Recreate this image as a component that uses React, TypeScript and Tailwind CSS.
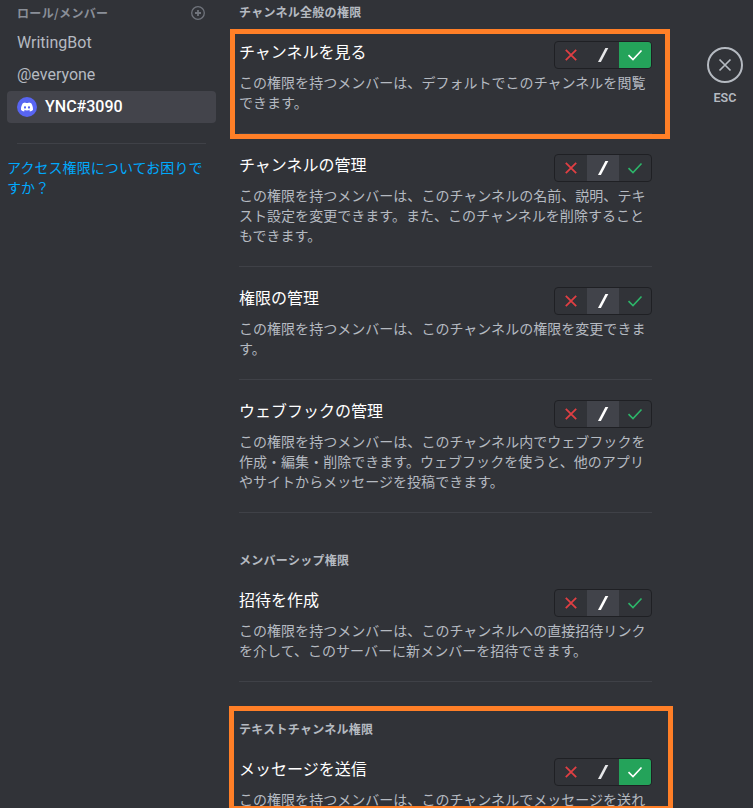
import React from "react";

type State = "neutral" | "allow";
type Permission = { title: string; lines: string[]; state: State };

function Toggle({ state }: { state: State }) {
  return (
    <div className="flex h-7 w-[98px] shrink-0 overflow-hidden rounded border border-[#1f2024]">
      <div className="flex w-8 items-center justify-center text-[#e03f43]">
        <svg width="16" height="16" viewBox="0 0 16 16" fill="none" stroke="currentColor" strokeWidth="1.8">
          <path d="M2.8 2.8l10.4 10.4M13.2 2.8L2.8 13.2" />
        </svg>
      </div>
      <div className={state === "neutral" ? "flex w-8 items-center justify-center bg-[#41434a] text-white" : "flex w-8 items-center justify-center text-[#e6e7e9]"}>
        <svg width="16" height="16" viewBox="0 0 16 16" fill="currentColor">
          <path d="M10.4 1h2.9L5.9 15H3z" />
        </svg>
      </div>
      <div className={state === "allow" ? "flex w-8 items-center justify-center bg-[#24a35a] text-white" : "flex w-8 items-center justify-center text-[#2db569]"}>
        <svg width="16" height="16" viewBox="0 0 16 16" fill="none" stroke="currentColor" strokeWidth="1.6">
          <path d="M1.5 8.2L6 12.5L14.5 3.5" />
        </svg>
      </div>
    </div>
  );
}

function PermissionRow({ item }: { item: Permission }) {
  return (
    <div className="mb-5">
      <div className="flex h-7 justify-between">
        <h3 className="text-[16px] leading-5 whitespace-nowrap text-white">{item.title}</h3>
        <Toggle state={item.state} />
      </div>
      <p className="mt-[3px] text-[14px] leading-5 tracking-[0.03px] whitespace-nowrap text-[#b5bac1]">
        {item.lines.map((line) => (
          <span key={line} className="block">{line}</span>
        ))}
      </p>
      <div className="mt-[21px] h-px bg-[#3f4147]" />
    </div>
  );
}

function Section({ title, items }: { title: string; items: Permission[] }) {
  return (
    <section className="mb-[39px]">
      <h2 className="mb-[21px] text-[12px] leading-4 font-bold tracking-[0.28px] text-[#b5bac1]">{title}</h2>
      {items.map((item) => (
        <PermissionRow key={item.title} item={item} />
      ))}
    </section>
  );
}

const sections: { title: string; items: Permission[] }[] = [
  {
    title: "チャンネル全般の権限",
    items: [
      { title: "チャンネルを見る", state: "allow", lines: ["この権限を持つメンバーは、デフォルトでこのチャンネルを閲覧", "できます。"] },
      { title: "チャンネルの管理", state: "neutral", lines: ["この権限を持つメンバーは、このチャンネルの名前、説明、テキ", "スト設定を変更できます。また、このチャンネルを削除すること", "もできます。"] },
      { title: "権限の管理", state: "neutral", lines: ["この権限を持つメンバーは、このチャンネルの権限を変更できま", "す。"] },
      { title: "ウェブフックの管理", state: "neutral", lines: ["この権限を持つメンバーは、このチャンネル内でウェブフックを", "作成・編集・削除できます。ウェブフックを使うと、他のアプリ", "やサイトからメッセージを投稿できます。"] },
    ],
  },
  {
    title: "メンバーシップ権限",
    items: [
      { title: "招待を作成", state: "neutral", lines: ["この権限を持つメンバーは、このチャンネルへの直接招待リンク", "を介して、このサーバーに新メンバーを招待できます。"] },
    ],
  },
  {
    title: "テキストチャンネル権限",
    items: [
      { title: "メッセージを送信", state: "allow", lines: ["この権限を持つメンバーは、このチャンネルでメッセージを送れ"] },
    ],
  },
];

function Sidebar() {
  return (
    <aside className="ml-[7px] w-[209px] shrink-0 pt-[5px]">
      <div className="flex h-4 items-center justify-between pr-[11px] pl-[10px]">
        <span className="text-[12px] leading-4 font-bold tracking-[0.35px] text-[#8a8f98]">ロール/メンバー</span>
        <svg width="14" height="14" viewBox="0 0 14 14" fill="none" stroke="#70747c" strokeWidth="1.3">
          <circle cx="7" cy="7" r="6.3" />
          <path d="M7 4v6M4 7h6" strokeWidth="1.8" />
        </svg>
      </div>
      <div className="mt-[6px] h-8 pl-[10px] font-[Roboto] text-[16px] leading-8 text-[#b5bac1]">WritingBot</div>
      <div className="h-8 pl-[10px] font-[Roboto] text-[16px] leading-8 text-[#b5bac1]">@everyone</div>
      <div className="flex h-8 items-center rounded bg-[#43444b] pl-[10px]">
        <span className="flex size-5 items-center justify-center rounded-full bg-[#5865f2]">
          <svg width="12" height="10" viewBox="0 0 127.14 96.36" fill="white">
            <path d="M107.7 8.07A105.15 105.15 0 0 0 81.47 0a72.06 72.06 0 0 0-3.36 6.83 97.68 97.68 0 0 0-29.11 0A72.37 72.37 0 0 0 45.64 0a105.89 105.89 0 0 0-26.25 8.09C2.79 32.65-1.71 56.6.54 80.21a105.73 105.73 0 0 0 32.17 16.15 77.7 77.7 0 0 0 6.89-11.11 68.42 68.42 0 0 1-10.85-5.18c.91-.66 1.8-1.34 2.66-2a75.57 75.57 0 0 0 64.32 0c.87.71 1.76 1.39 2.66 2a68.68 68.68 0 0 1-10.87 5.19 77 77 0 0 0 6.89 11.1 105.25 105.25 0 0 0 32.19-16.14c2.64-27.38-4.51-51.11-18.9-72.15ZM42.45 65.69C36.18 65.69 31 60 31 53s5-12.74 11.43-12.74S54 46 53.89 53s-5.05 12.69-11.44 12.69Zm42.24 0C78.41 65.69 73.25 60 73.25 53s5-12.74 11.44-12.74S96.23 46 96.12 53s-5.04 12.69-11.43 12.69Z" />
          </svg>
        </span>
        <span className="ml-2 font-[Roboto] text-[16px] leading-8 font-medium text-white">YNC#3090</span>
      </div>
      <div className="mt-5 mr-[10px] ml-[10px] h-px bg-[#3f4147]" />
      <a className="mt-[13px] block text-[14px] leading-5 tracking-[0.08px] whitespace-nowrap text-[#00a8fc]">
        アクセス権限についてお困りで<br />すか？
      </a>
    </aside>
  );
}

export default function App() {
  return (
    <div className="relative flex h-[808px] w-[753px] overflow-hidden bg-[#313338] font-['Noto_Sans_CJK_JP',sans-serif]">
      <Sidebar />
      <main className="ml-[23px] w-[413px] shrink-0 pt-[4px]">
        {sections.map((s) => (
          <Section key={s.title} title={s.title} items={s.items} />
        ))}
      </main>
      <div className="ml-[55px] flex w-9 flex-col items-center pt-[47px] text-[#b5bac1]">
        <div className="flex size-9 items-center justify-center rounded-full border-2 border-[#b5bac1]">
          <svg width="18" height="18" viewBox="0 0 18 18" fill="none" stroke="currentColor" strokeWidth="1.7">
            <path d="M3.5 3.5l11 11M14.5 3.5l-11 11" />
          </svg>
        </div>
        <span className="mt-[7px] font-[Roboto] text-[12.5px] leading-4 font-semibold">ESC</span>
      </div>
      <div className="absolute top-[29px] left-[230px] h-[110px] w-[440px] border-5 border-[#ff7f27]" />
      <div className="absolute top-[706px] left-[229px] h-[105px] w-[444px] border-5 border-[#ff7f27]" />
    </div>
  );
}
